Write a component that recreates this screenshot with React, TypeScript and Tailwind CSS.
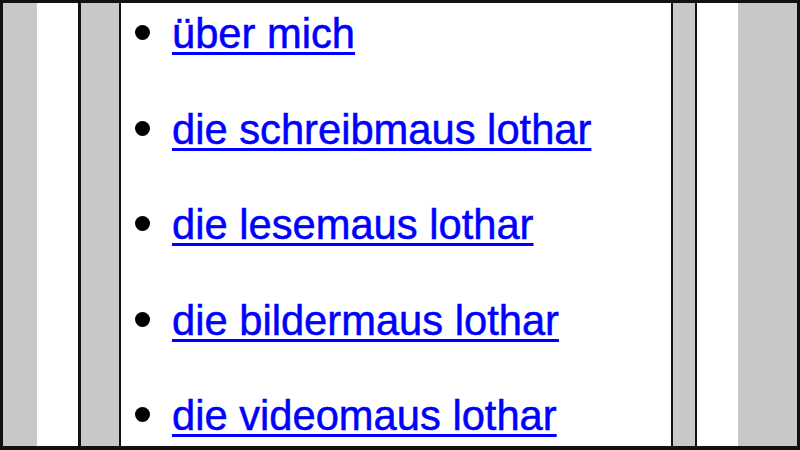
import React from "react";

const links = [
  "über mich",
  "die schreibmaus lothar",
  "die lesemaus lothar",
  "die bildermaus lothar",
  "die videomaus lothar",
];

export default function App() {
  return (
    <div className="w-[800px] h-[450px] overflow-hidden bg-white border-[3px] border-b-4 border-[#111] flex">
      <div className="w-[34px] shrink-0 bg-[#c8c8c8]" />
      <div className="w-[41px] shrink-0 bg-white" />
      <div className="w-[3px] shrink-0 bg-[#111]" />
      <div className="w-[38px] shrink-0 bg-[#c8c8c8]" />
      <div className="w-[2px] shrink-0 bg-[#111]" />
      <div className="flex-1 overflow-hidden bg-white">
        <ul
          className="list-disc mt-[-18px] pl-[51px] text-[41.7px] leading-[92.5px] text-[#0000ff] [-webkit-text-stroke:0.5px_#0000ff]"
          style={{ fontFamily: '"Liberation Sans", Arial, sans-serif' }}
        >
          {links.map((label) => (
            <li key={label} className="marker:text-black marker:text-[50px]">
              <a href="#" className="underline decoration-[3px] underline-offset-[4px]">
                {label}
              </a>
            </li>
          ))}
        </ul>
      </div>
      <div className="w-[2px] shrink-0 bg-[#111]" />
      <div className="w-[22px] shrink-0 bg-[#c8c8c8]" />
      <div className="w-[2px] shrink-0 bg-[#111]" />
      <div className="w-[41px] shrink-0 bg-white" />
      <div className="w-[59px] shrink-0 bg-[#c8c8c8]" />
    </div>
  );
}
